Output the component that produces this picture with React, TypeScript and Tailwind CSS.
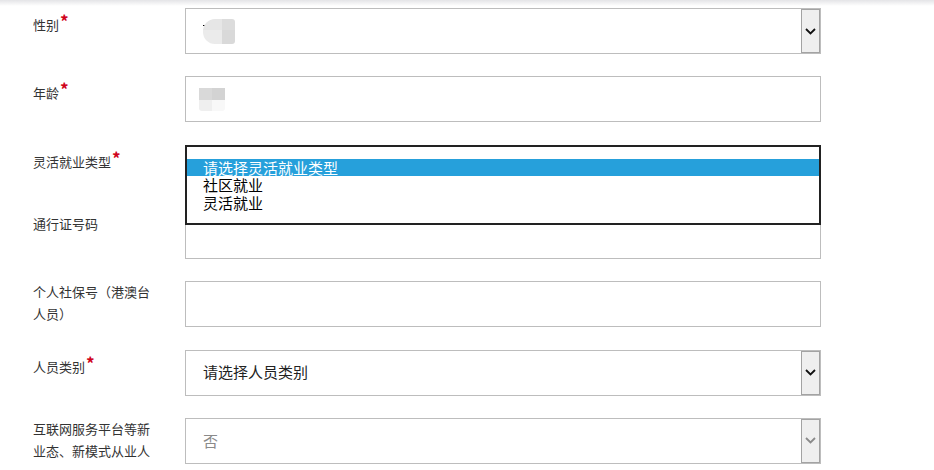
const font = { fontFamily: '"Noto Sans CJK SC", "Noto Sans", sans-serif' };

function Chevron({ muted = false }: { muted?: boolean }) {
  return (
    <svg width="11" height="7" viewBox="0 0 11 7" className="block">
      <polyline
        points="1,1 5.5,5.5 10,1"
        fill="none"
        stroke={muted ? "#8a8a8a" : "#111"}
        strokeWidth="1.8"
      />
    </svg>
  );
}

function Label({ text, required }: { text: string; required?: boolean }) {
  return (
    <div
      className={`w-[122px] shrink-0 text-[13px] leading-[22px] text-[#333] ${required ? "pt-[4px]" : ""}`}
    >
      {text}
      {required && (
        <span className="relative -top-[2px] ml-[1px] text-[17px] font-bold text-[#d0021b]">*</span>
      )}
    </div>
  );
}

function Box({ children, select, muted }: { children?: React.ReactNode; select?: boolean; muted?: boolean }) {
  return (
    <div className="relative ml-[30px] flex h-[46px] w-[636px] items-center border border-[#bdbdbd] bg-white pl-[17px]">
      <div className="flex-1 text-[15px]">{children}</div>
      {select && (
        <div className="flex h-[44px] w-[19px] items-center justify-center border border-[#a3a3a3] bg-[#efefef]">
          <Chevron muted={muted} />
        </div>
      )}
    </div>
  );
}

function Row({ label, required, children }: { label: string; required?: boolean; children: React.ReactNode }) {
  return (
    <div className="relative flex h-[46px]">
      <div className="h-[46px] overflow-hidden">
        <Label text={label} required={required} />
      </div>
      {children}
    </div>
  );
}

export default function App() {
  return (
    <div className="h-[470px] w-[934px] overflow-hidden bg-white" style={font}>
      <div className="h-[6px] bg-gradient-to-b from-[#e4e4e7] to-white" />
      <div className="flex flex-col gap-[22.34px] pl-[33px] pt-[2px]">
        <Row label="性别" required>
          <Box select>
            <div className="relative h-[25px] w-[32px]">
              <div className="absolute left-0 top-[6px] h-[1px] w-[2px] bg-black" />
              <div className="absolute left-0 top-0 grid h-[25px] w-[32px] grid-cols-[19px_13px] grid-rows-[11px_14px] overflow-hidden rounded-l-[12px] rounded-r-[3px]">
                <div className="bg-[#e6e6e6]" />
                <div className="bg-[#dcdcdc]" />
                <div className="bg-[#ebebeb]" />
                <div className="bg-[#d9d9d9]" />
              </div>
            </div>
          </Box>
        </Row>
        <Row label="年龄" required>
          <Box>
            <div className="-ml-[4px] grid h-[23px] w-[26px] grid-cols-[13px_13px] grid-rows-[12px_11px] overflow-hidden rounded-b-[3px]">
              <div className="bg-[#d9d9d9]" />
              <div className="bg-[#d3d3d3]" />
              <div className="bg-[#efefef]" />
              <div className="bg-[#f8f8f8]" />
            </div>
          </Box>
        </Row>
        <Row label="灵活就业类型" required>
          <Box select />
          <div className="absolute left-[152px] top-0 z-10 h-[80px] w-[636px] border-2 border-[#222] bg-white pt-[12px] text-[15px] leading-[17.5px] text-black">
            <div className="bg-[#26a0db] pl-[16px] text-white">请选择灵活就业类型</div>
            <div className="pl-[16px]">社区就业</div>
            <div className="pl-[16px]">灵活就业</div>
          </div>
        </Row>
        <Row label="通行证号码">
          <Box />
        </Row>
        <Row label="个人社保号（港澳台人员）">
          <Box />
        </Row>
        <Row label="人员类别" required>
          <Box select>
            <span className="text-[#222]">请选择人员类别</span>
          </Box>
        </Row>
        <Row label="互联网服务平台等新业态、新模式从业人员">
          <Box select muted>
            <span className="text-[#8a8a8a]">否</span>
          </Box>
        </Row>
      </div>
    </div>
  );
}
